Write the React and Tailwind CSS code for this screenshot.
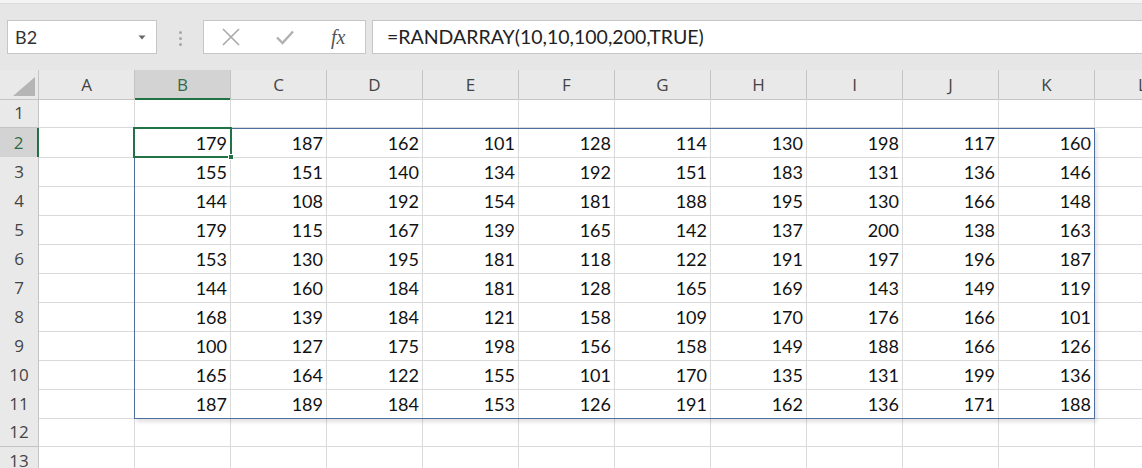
import React from "react";

const data = [
  [179, 187, 162, 101, 128, 114, 130, 198, 117, 160],
  [155, 151, 140, 134, 192, 151, 183, 131, 136, 146],
  [144, 108, 192, 154, 181, 188, 195, 130, 166, 148],
  [179, 115, 167, 139, 165, 142, 137, 200, 138, 163],
  [153, 130, 195, 181, 118, 122, 191, 197, 196, 187],
  [144, 160, 184, 181, 128, 165, 169, 143, 149, 119],
  [168, 139, 184, 121, 158, 109, 170, 176, 166, 101],
  [100, 127, 175, 198, 156, 158, 149, 188, 166, 126],
  [165, 164, 122, 155, 101, 170, 135, 131, 199, 136],
  [187, 189, 184, 153, 126, 191, 162, 136, 171, 188],
];

const cols = ["A", "B", "C", "D", "E", "F", "G", "H", "I", "J", "K", "L"];
const uiFont = { fontFamily: '"Open Sans", "Noto Sans", sans-serif' };
const cellFont = { fontFamily: 'Lato, "Open Sans", sans-serif' };

function Toolbar() {
  return (
    <div className="flex h-[66px] items-start bg-[#e6e6e6] pt-[16px]">
      <div className="ml-[7px] flex h-[34px] w-[150px] items-center justify-between border border-[#c6c6c6] bg-white pl-[7px] pr-[10px]">
        <span className="text-[18px] text-[#333]" style={cellFont}>B2</span>
        <svg width="8" height="5" viewBox="0 0 8 5"><path d="M0.5 0.5 L7.5 0.5 L4 4.5 Z" fill="#666" /></svg>
      </div>
      <div className="flex h-[34px] w-[46px] flex-col items-center justify-center gap-[3px] pt-[2px]">
        <span className="h-[3px] w-[3px] rounded-full bg-[#a6a6a6]" />
        <span className="h-[3px] w-[3px] rounded-full bg-[#a6a6a6]" />
        <span className="h-[3px] w-[3px] rounded-full bg-[#a6a6a6]" />
      </div>
      <div className="flex h-[34px] w-[163px] items-center border border-[#c6c6c6] bg-white">
        <div className="flex w-[54px] justify-center">
          <svg width="20" height="20" viewBox="0 0 20 20"><path d="M2 2 L18 18 M18 2 L2 18" stroke="#a8a8a8" strokeWidth="1.6" /></svg>
        </div>
        <div className="flex w-[54px] justify-center">
          <svg width="20" height="16" viewBox="0 0 20 16"><path d="M2 8.5 L7.5 14 L18 2.5" stroke="#b0b0b0" strokeWidth="2.4" fill="none" /></svg>
        </div>
        <div className="flex w-[54px] justify-center">
          <span className="text-[20px] italic text-[#555]" style={{ fontFamily: '"Liberation Serif", "DejaVu Serif", serif' }}>fx</span>
        </div>
      </div>
      <div className="ml-[6px] flex h-[34px] flex-1 items-center border-y border-l border-[#c6c6c6] bg-white pl-[14px]">
        <span className="text-[19.5px] text-[#222]" style={cellFont}>=RANDARRAY(10,10,100,200,TRUE)</span>
      </div>
    </div>
  );
}

function Grid() {
  const template = { gridTemplateColumns: "39px repeat(12, 96px)" };
  const rows = Array.from({ length: 13 }, (_, i) => i + 1);
  return (
    <div className="relative">
      <div className="grid h-[29px] bg-[#e9e9e9]" style={template}>
        <div className="relative border-b border-r border-[#c4c4c4]">
          <svg className="absolute bottom-[3px] right-[3px]" width="22" height="19" viewBox="0 0 22 19"><path d="M22 0 L22 19 L0 19 Z" fill="#b5b5b5" /></svg>
        </div>
        {cols.map((c) => {
          const sel = c === "B";
          return (
            <div
              key={c}
              className={
                sel
                  ? "flex items-center justify-center border-b-2 border-r border-b-[#217346] border-r-[#c4c4c4] bg-[#d3d3d3] pt-[2px] text-[17px] text-[#2f6b47]"
                  : "flex items-center justify-center border-b border-r border-[#c4c4c4] pt-[1px] text-[17px] text-[#444]"
              }
              style={uiFont}
            >
              {c}
            </div>
          );
        })}
      </div>
      {rows.map((r) => {
        const sel = r === 2;
        const vals = r >= 2 && r <= 11 ? data[r - 2] : null;
        return (
          <div key={r} className="grid h-[29px] bg-white" style={template}>
            <div
              className={
                sel
                  ? "flex items-center justify-center border-b border-r-2 border-b-[#c4c4c4] border-r-[#217346] bg-[#d3d3d3] text-[17px] text-[#2f6b47]"
                  : "flex items-center justify-center border-b border-r border-[#c4c4c4] bg-[#e9e9e9] text-[17px] text-[#444]"
              }
              style={uiFont}
            >
              {r}
            </div>
            {cols.map((c, ci) => {
              const v = vals && ci >= 1 && ci <= 10 ? vals[ci - 1] : "";
              return (
                <div
                  key={c}
                  className="flex items-center justify-end border-b border-r border-[#dadada] pr-[3px] pt-[2px] text-[18px] text-[#111]"
                  style={cellFont}
                >
                  {v}
                </div>
              );
            })}
          </div>
        );
      })}
      <div className="pointer-events-none absolute left-[134px] top-[58px] h-[291px] w-[961px] border border-[#4f6fa3] shadow-[2px_3px_4px_rgba(0,0,0,0.12)]" />
      <div className="pointer-events-none absolute left-[133px] top-[57px] h-[31px] w-[99px] border-2 border-[#217346]" />
      <div className="pointer-events-none absolute left-[228px] top-[84px] h-[6px] w-[6px] border border-white bg-[#217346]" />
    </div>
  );
}

export default function App() {
  return (
    <div className="h-[468px] w-[1142px] overflow-hidden bg-[#e6e6e6]">
      <div className="h-[4px] border-b border-[#dcdcdc] bg-[#f4f4f4]" />
      <Toolbar />
      <Grid />
    </div>
  );
}
